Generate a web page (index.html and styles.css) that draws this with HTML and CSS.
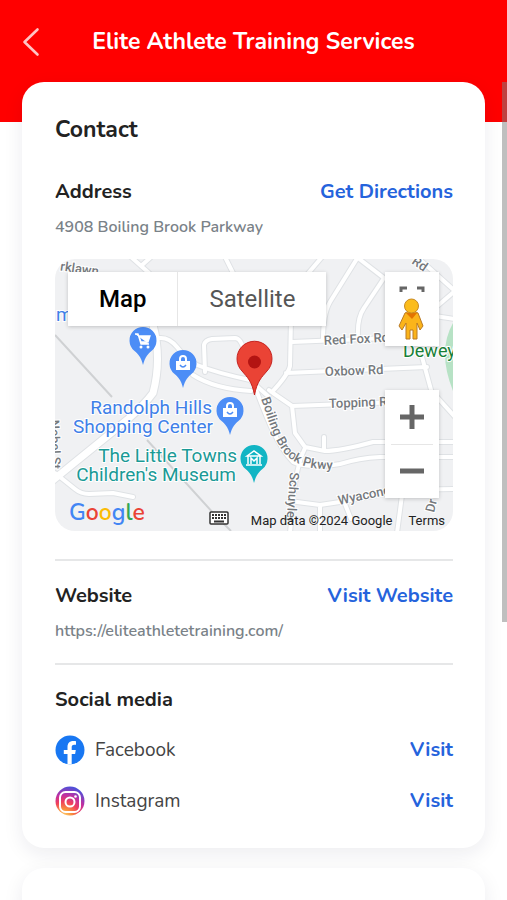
FILE: index.html
```html
<!DOCTYPE html>
<html lang="en">
  <head>
    <meta charset="UTF-8" />
    <title>Elite Athlete Training Services</title>
    <meta name="viewport" content="width=device-width, initial-scale=1.0" />
    <link rel="stylesheet" href="styles.css">
  </head>
  <body>
    <header class="top-bar">
      <div class="top-row">
        <button type="button" class="back-button" aria-label="Back">
          <svg width="18" height="30" viewBox="0 0 18 30">
            <path d="M15.500 2.500L2.500 15L15.500 27.500" fill="none" stroke="#ffc4c4" stroke-width="2.600" stroke-linecap="round" stroke-linejoin="round" />
          </svg>
        </button>
        <h1>Elite Athlete Training Services</h1>
      </div>
    </header>

    <main>
      <section class="card">
        <h2>Contact</h2>

        <div class="block">
          <div class="row">
            <h3>Address</h3>
            <a href="#">Get Directions</a>
          </div>
          <p class="detail">4908 Boiling Brook Parkway</p>

          <div class="map">
            <svg class="map-canvas" viewBox="0 0 398 272" preserveAspectRatio="xMidYMid slice">
              <defs>
                <path id="pin" d="M0 25C-2 17-5 14-9 10.500A13.500 13.500 0 1 1 9 10.500C5 14 2 17 0 25Z" />
                <path id="bag" d="M-7-2H7V7H-7ZM-4-2V-4A4 4 0 0 1 4-4V-2H2V-4A2 2 0 0 0-2-4V-2Z" />
                <path id="brook" d="M206 140C212 156 216 175 227 191C239 208 259 212 295 210" />
                <!-- drawn twice: edge colour below, white above -->
                <g id="roads" fill="none" stroke-linejoin="round" stroke-linecap="round">
                  <path d="M267-2L250 18M303-2L275 43Q268 55 268 81M303-1L329 19L309 49Q302 59 303 78" />
                  <path d="M237 83L333 79M236 60L235 107Q233 116 217 133M231 114L372 108" />
                  <path d="M362-2L400 32L380 49M380 57L400 60M367 98L378 138M382 138L400 158" />
                  <path d="M214 131L218 134L237 147L240 174L250 188L270 192Q285 192 318 183L400 183M237 147L345 143M269 178V191" />
                  <path d="M200 128C212 160 222 186 238 203Q252 210 285 205Q304 199 325 198H400" />
                  <path d="M250 189Q241 208 238 241L235 274M242 243L265 246L285 243L350 231L400 230M265 246V274M290 245L296 260M347 236L342 274" />
                  <path d="M104 79Q114 78 122 88Q132 101 142 106Q162 114 195 121L214 138M138 116Q160 130 196 132M150 113L149 86Q150 81 157 80L180 79Q186 79 190 94" />
                  <path d="M76-2L94 14M96-2L86 7M170-2L178 14M0 214L20 230Q26 235 34 235L58 234L78 238" />
                </g>
              </defs>

              <rect width="398" height="272" fill="#f0f1f3" />
              <path d="M398 64Q382 92 398 132Z" fill="#b7e2c5" />
              <path d="M0 76L57 138M92 181L160 256L176 272" fill="none" stroke="#cfd1d3" stroke-width="2" />
              <use href="#roads" stroke="#dfe2e5" stroke-width="6" />
              <path d="M98 66Q107 100 98 134Q90 145 72 161L-3 222" fill="none" stroke="#dfe2e5" stroke-width="9" />
              <use href="#roads" stroke="#fff" stroke-width="4" />
              <path d="M98 66Q107 100 98 134Q90 145 72 161L-3 222" fill="none" stroke="#fff" stroke-width="7" />

              <g class="street">
                <text x="2" y="11" transform="rotate(8 2 11)">ʻrklawn</text>
                <text x="356" y="4" transform="rotate(35 356 4)">Rd</text>
                <text x="269" y="86" transform="rotate(-3 269 86)">Red Fox Rd</text>
                <text x="270" y="117" transform="rotate(-2 270 117)">Oxbow Rd</text>
                <text x="274" y="149" transform="rotate(-2 274 149)">Topping Rd</text>
                <text x="284" y="246" transform="rotate(-12 284 246)">Wyaconda</text>
                <text x="235" y="213" transform="rotate(94 235 213)">Schuyler</text>
                <text x="379" y="254" transform="rotate(-76 379 254)">Dr</text>
                <text x="-5" y="161" transform="rotate(88 -5 161)">Nebel St</text>
                <text><textPath href="#brook">Boiling Brook Pkwy</textPath></text>
              </g>

              <g class="place">
                <text x="1" y="62">m</text>
                <text x="157" y="155" text-anchor="end">Randolph Hills</text>
                <text x="158" y="174" text-anchor="end">Shopping Center</text>
                <text class="museum" x="182" y="203" text-anchor="end">The Little Towns</text>
                <text class="museum" x="181" y="222" text-anchor="end">Children's Museum</text>
                <text class="park" x="348" y="98">Dewey</text>
              </g>

              <g transform="translate(88 81)">
                <use href="#pin" fill="#4c8df6" />
                <path d="M-8-6H-5L-2 4H6M-4-4H7L5 2H-2Z" fill="#fff" stroke="#fff" stroke-width="1.300" />
                <circle cx="-2" cy="7" r="1.500" fill="#fff" />
                <circle cx="5" cy="7" r="1.500" fill="#fff" />
              </g>
              <g transform="translate(128 104)">
                <use href="#pin" fill="#4c8df6" />
                <use href="#bag" fill="#fff" />
                <path d="M-3 2Q0 6 3 2" fill="none" stroke="#4c8df6" stroke-width="1.400" />
              </g>
              <g transform="translate(175 151)">
                <use href="#pin" fill="#4c8df6" />
                <use href="#bag" fill="#fff" />
                <path d="M-3 2Q0 6 3 2" fill="none" stroke="#4c8df6" stroke-width="1.400" />
              </g>
              <g transform="translate(199 199)">
                <use href="#pin" fill="#12b5c4" />
                <path d="M-7-2L0-7L7-2ZM-6-2V6M6-2V6M-8 7H8M-3 6V0L0 3L3 0V6" fill="none" stroke="#fff" stroke-width="1.500" />
              </g>
              <path d="M199.500 136C197 122 192 118 187 112A17.500 17.500 0 1 1 212 112C207 118 202 122 199.500 136Z" fill="#ea4335" stroke="#c5221f" stroke-width="1" />
              <circle cx="199.500" cy="103" r="6.500" fill="#b31412" />
            </svg>

            <div class="map-type">
              <button type="button" class="active">Map</button>
              <button type="button">Satellite</button>
            </div>

            <button type="button" class="street-view" aria-label="Street View">
              <svg width="54" height="74" viewBox="0 0 54 74">
                <path d="M16 20V16H22M32 16H38V20" fill="none" stroke="#666" stroke-width="3" />
                <path d="M20 41Q26 37 33 41L38 54L35 58L32 51V67H28V58H25V67H21V51L17 58L14 54Z" fill="#fbb41a" stroke="#b97a24" stroke-width="1" stroke-linejoin="round" />
                <path d="M21 41H32L27 47Z" fill="#e37400" />
                <circle cx="26.500" cy="34" r="7" fill="#fbbc1c" stroke="#c78a24" stroke-width="1" />
              </svg>
            </button>

            <div class="zoom">
              <button type="button" aria-label="Zoom in">
                <svg width="26" height="26" viewBox="0 0 26 26"><path d="M13 1V25M1 13H25" stroke="#666" stroke-width="5" /></svg>
              </button>
              <button type="button" aria-label="Zoom out">
                <svg width="26" height="26" viewBox="0 0 26 26"><path d="M1 13H25" stroke="#666" stroke-width="5" /></svg>
              </button>
            </div>

            <div class="map-footer">
              <a href="#" class="google"><span class="blue">G</span><span class="red">o</span><span class="yellow">o</span><span class="blue">g</span><span class="green">l</span><span class="red">e</span></a>
              <button type="button" class="keyboard" aria-label="Keyboard shortcuts">
                <svg width="20" height="14" viewBox="0 0 20 14">
                  <rect x="1" y="1" width="18" height="12" rx="1" fill="#fff" stroke="#333" stroke-width="1.500" />
                  <path d="M3 4H17M3 7H17" stroke="#333" stroke-width="2" stroke-dasharray="2 1" />
                  <path d="M5 10.500H15" stroke="#333" stroke-width="2" />
                </svg>
              </button>
              <span>Map data ©2024 Google</span>
              <a href="#">Terms</a>
            </div>
          </div>
        </div>

        <div class="block">
          <div class="row">
            <h3>Website</h3>
            <a href="#">Visit Website</a>
          </div>
          <p class="detail">https://eliteathletetraining.com/</p>
        </div>

        <div class="block">
          <h3>Social media</h3>
          <ul class="social">
            <li class="row">
              <svg width="30" height="30" viewBox="0 0 30 30">
                <circle cx="15" cy="15" r="14.500" fill="#1877f2" />
                <path d="M12.500 29.400V19H8.800V15H12.500V12C12.500 8 14.800 6 18.200 6C19.700 6 21 6.200 21 6.200V9.700H19.200C17.300 9.700 16.700 10.800 16.700 12V15H20.800L20.100 19H16.700V29.400Z" fill="#fff" />
              </svg>
              <span>Facebook</span>
              <a href="#">Visit</a>
            </li>
            <li class="row">
              <svg width="30" height="30" viewBox="0 0 30 30">
                <defs>
                  <radialGradient id="insta" cx="0.300" cy="1.050" r="1.050">
                    <stop offset="0" stop-color="#ffd776" />
                    <stop offset="0.250" stop-color="#f9923c" />
                    <stop offset="0.500" stop-color="#f0405c" />
                    <stop offset="0.720" stop-color="#c22fa0" />
                    <stop offset="1" stop-color="#4f4fd8" />
                  </radialGradient>
                </defs>
                <circle cx="15" cy="15" r="14.500" fill="url(#insta)" />
                <g fill="none" stroke="#fff" stroke-width="2">
                  <rect x="5" y="6" width="20" height="20" rx="5.500" />
                  <circle cx="15" cy="16" r="4.500" />
                </g>
                <circle cx="20.500" cy="10.500" r="1.300" fill="#fff" />
              </svg>
              <span>Instagram</span>
              <a href="#">Visit</a>
            </li>
          </ul>
        </div>
      </section>

      <section class="card"></section>
    </main>

    <div class="scroll-thumb"></div>
  </body>
</html>
```
FILE: styles.css
```css
* {
  box-sizing: border-box;
}

body {
  margin: 0;
  height: 100vh;
  overflow: hidden;
  font-family: Nunito, "Open Sans", sans-serif;
  color: #222;
  background-color: #fff;
}

h1,
h2,
h3,
p,
ul {
  margin: 0;
  padding: 0;
  font-weight: 700;
}

a {
  color: #2563dc;
  text-decoration: none;
}

button {
  padding: 0;
  border: none;
  background: none;
  cursor: pointer;
}

svg {
  display: block;
}

.top-bar {
  height: 122px;
  background-color: #ff0000;
}

.top-row {
  display: grid;
  grid-template-columns: 50px 1fr 50px;
  align-items: center;
  height: 84px;
  padding: 0 22px;
  color: #fff;
}

h1 {
  font-size: 23px;
  line-height: 28px;
  text-align: center;
  white-space: nowrap;
}

main {
  margin-top: -40px;
  padding: 0 22px;
}

.card {
  min-height: 100px;
  margin-bottom: 20px;
  padding: 33px 32px 22px 33px;
  border-radius: 22px;
  background-color: #fff;
  box-shadow: 0 6px 20px rgba(30, 30, 60, 0.08);
}

h2 {
  margin-bottom: 32px;
  font-size: 23px;
  line-height: 30px;
}

h3,
.row a {
  font-size: 20px;
  line-height: 30px;
  font-weight: 700;
}

.row {
  display: flex;
  align-items: center;
}

.row a {
  margin-left: auto;
}

.detail {
  margin-top: 8px;
  font-size: 16px;
  line-height: 24px;
  font-weight: 600;
  color: #7a8288;
}

.block + .block {
  margin-top: 28px;
  padding-top: 20px;
  border-top: 2px solid #e6e7e8;
}

.block + .block + .block {
  margin-top: 20px;
}

.social {
  margin-top: 9px;
  list-style: none;
}

.social .row {
  gap: 10px;
  height: 51px;
  font-size: 19px;
  font-weight: 400;
  color: #444;
}

/* Map */
.map {
  position: relative;
  margin-top: 20px;
  aspect-ratio: 398 / 272;
  border-radius: 20px;
  overflow: hidden;
  font-family: Roboto, sans-serif;
}

.map-canvas {
  width: 100%;
  height: 100%;
}

.street {
  font-size: 13px;
  font-weight: 500;
  fill: #75797d;
  stroke: #fff;
  stroke-width: 2px;
  paint-order: stroke;
}

.place {
  font-size: 19px;
  fill: #4080e8;
  stroke: #fff;
  stroke-width: 2px;
  paint-order: stroke;
}

.museum {
  fill: #1a9a96;
}

.park {
  font-size: 18px;
  fill: #188038;
}

.map-type,
.street-view,
.zoom {
  position: absolute;
  background-color: #fff;
  box-shadow: 0 1px 4px rgba(0, 0, 0, 0.2);
}

.map-type {
  top: 13px;
  left: 13px;
  display: flex;
  height: 54px;
}

.map-type button {
  padding: 0 31px;
  font-family: inherit;
  font-size: 24px;
  color: #565656;
}

.map-type .active {
  border-right: 1px solid #e6e6e6;
  font-weight: 500;
  color: #000;
}

.street-view {
  top: 13px;
  right: 14px;
}

.zoom {
  right: 14px;
  bottom: 33px;
  display: flex;
  flex-direction: column;
  width: 54px;
  height: 108px;
  padding: 0 6px;
}

.zoom button {
  display: flex;
  flex: 1;
  align-items: center;
  justify-content: center;
}

.zoom button + button {
  border-top: 1px solid #e6e6e6;
}

.map-footer {
  position: absolute;
  right: 0;
  bottom: 0;
  left: 0;
  display: flex;
  align-items: flex-end;
  padding: 0 8px 2px 14px;
  font-size: 13px;
  line-height: 16px;
  color: #222;
  white-space: nowrap;
}

.map-footer a {
  margin-left: 16px;
  color: #222;
}

.map-footer .google {
  margin-left: 0;
  font-family: Nunito, sans-serif;
  font-size: 23px;
  font-weight: 600;
  line-height: 32px;
}

.keyboard {
  margin-left: auto;
  margin-right: 22px;
  padding-bottom: 4px;
}

.map-footer .blue {
  color: #4285f4;
}

.red {
  color: #ea4335;
}

.yellow {
  color: #fbbc05;
}

.green {
  color: #34a853;
}

/* Scrollbar thumb over the page edge */
.scroll-thumb {
  position: absolute;
  top: 82px;
  right: 0;
  width: 5px;
  height: 60%;
  background-color: rgba(128, 128, 128, 0.5);
}
```
